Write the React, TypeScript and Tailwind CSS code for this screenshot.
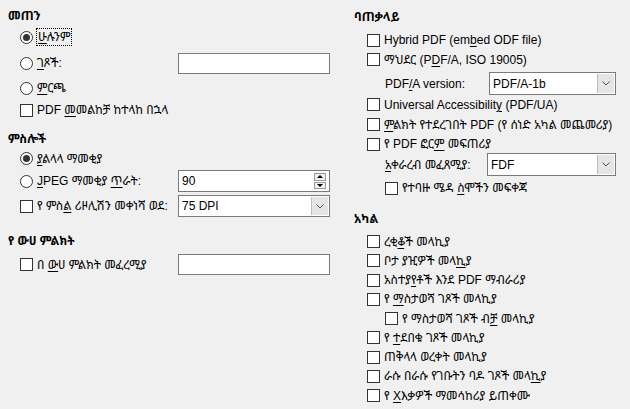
import React from "react";

const U = ({ children }: { children: React.ReactNode }) => (
  <span className="underline underline-offset-2 decoration-1">{children}</span>
);

const Radio = ({ checked }: { checked?: boolean }) => (
  <span className="w-[13px] h-[13px] rounded-full border border-[#333] bg-white flex items-center justify-center shrink-0">
    {checked && <span className="w-[7px] h-[7px] rounded-full bg-[#333]" />}
  </span>
);

const Check = () => <span className="w-[13px] h-[13px] border border-[#333] bg-white shrink-0" />;

const TextBox = () => <div className="w-[152px] h-[21px] border border-[#7a7a7a] bg-white" />;

const Chevron = () => (
  <svg width="8" height="5" viewBox="0 0 8 5" fill="none">
    <path d="M0.5 0.5 L4 4 L7.5 0.5" stroke="#555" strokeWidth="1" />
  </svg>
);

const Combo = ({ value, w }: { value: string; w: string }) => (
  <div className={`flex h-full border border-[#7a7a7a] bg-white ${w}`}>
    <span className="flex-1 flex items-center px-[3px]">{value}</span>
    <span className="w-[17px] m-[1px] bg-[#e5e5e5] border-l border-[#bdbdbd] flex items-center justify-center">
      <Chevron />
    </span>
  </div>
);

const Spin = ({ value }: { value: string }) => (
  <div className="flex w-[152px] h-full border border-[#7a7a7a] bg-white">
    <span className="flex-1 flex items-center px-[3px]">{value}</span>
    <span className="flex flex-col gap-[1px] my-[2px] mr-[3px]">
      <span className="w-[12px] h-[8px] border border-[#9a9a9a] bg-[#f0f0f0] flex items-center justify-center">
        <svg width="6" height="3" viewBox="0 0 6 3">
          <path d="M0 3 L3 0 L6 3 Z" fill="#000" />
        </svg>
      </span>
      <span className="w-[12px] h-[8px] border border-[#9a9a9a] bg-[#f0f0f0] flex items-center justify-center">
        <svg width="6" height="3" viewBox="0 0 6 3">
          <path d="M0 0 L3 3 L6 0 Z" fill="#000" />
        </svg>
      </span>
    </span>
  </div>
);

const Heading = ({ children, cls }: { children: React.ReactNode; cls: string }) => (
  <div className={`flex items-center h-[16px] font-bold ${cls}`}>{children}</div>
);

const Item = ({ box, children, cls }: { box: React.ReactNode; children: React.ReactNode; cls: string }) => (
  <div className={`flex items-center gap-[4px] ${cls}`}>
    {box}
    <span className="whitespace-nowrap">{children}</span>
  </div>
);

export default function App() {
  return (
    <div className="w-[630px] h-[409px] bg-[#f0f0f0] flex text-[12px] leading-none text-black font-['Liberation_Sans','Noto_Sans','Noto_Sans_Ethiopic',sans-serif]">
      {/* left column */}
      <div className="w-[340px] pl-[8px] pt-[8px] flex flex-col">
        <Heading cls="">መጠን</Heading>
        <div className="flex items-center h-[26px] pl-[12px] gap-[4px]">
          <Radio checked />
          <span className="outline-1 outline-dotted outline-black px-[1px] py-[2px]">
            <U>ሁ</U>ሉንም
          </span>
        </div>
        <div className="flex items-center h-[26px] pl-[12px]">
          <Item box={<Radio />} cls="w-[158px]">
            <U>ገ</U>ጾች:
          </Item>
          <TextBox />
        </div>
        <Item box={<Radio />} cls="h-[24px] pl-[12px]">
          <U>ም</U>ርጫ
        </Item>
        <Item box={<Check />} cls="h-[20px] pl-[12px]">
          PDF <U>መ</U>መልከቻ ከተላከ በኋላ
        </Item>

        <Heading cls="mt-[11px]">ምስሎች</Heading>
        <Item box={<Radio checked />} cls="h-[23px] pl-[12px]">
          <U>ያ</U>ልላላ ማመቂያ
        </Item>
        <div className="flex items-center h-[22px] pl-[12px]">
          <Item box={<Radio />} cls="w-[158px]">
            <U>J</U>PEG ማመቂያ <U>ጥ</U>ራት:
          </Item>
          <Spin value="90" />
        </div>
        <div className="flex items-center h-[22px] mt-[3px] pl-[12px]">
          <Item box={<Check />} cls="w-[158px]">
            የ ምስ<U>ል</U> ሪዞሊሽን መቀነሻ ወደ:
          </Item>
          <Combo value="75 DPI" w="w-[152px]" />
        </div>

        <Heading cls="mt-[16px]">የ ውሀ ምልክት</Heading>
        <div className="flex items-center h-[21px] mt-[5px] pl-[12px]">
          <Item box={<Check />} cls="w-[158px]">
            በ <U>ው</U>ሀ ምልክት መፈረሚያ
          </Item>
          <TextBox />
        </div>
      </div>

      {/* right column */}
      <div className="flex-1 pl-[14px] pt-[9px] flex flex-col">
        <Heading cls="">ባጠቃላይ</Heading>
        <Item box={<Check />} cls="h-[20px] mt-[5px] pl-[13px]">
          Hybrid PDF (em<U>b</U>ed ODF file)
        </Item>
        <Item box={<Check />} cls="h-[19px] pl-[13px]">
          ማህደር (P<U>D</U>F/A, ISO 19005)
        </Item>
        <div className="flex items-center h-[23px] mt-[3px] pl-[31px]">
          <span className="w-[104px] whitespace-nowrap">
            PDF<U>/</U>A version:
          </span>
          <Combo value="PDF/A-1b" w="w-[127px]" />
        </div>
        <Item box={<Check />} cls="h-[19px] pl-[13px]">
          Universal Accessibilit<U>y</U> (PDF/UA)
        </Item>
        <Item box={<Check />} cls="h-[21px] pl-[13px]">
          <U>ም</U>ልክት የተደረገበት PDF (የ ሰነድ አካል መጨመሪያ)
        </Item>
        <Item box={<Check />} cls="h-[18px] pl-[13px]">
          የ PDF ፎር<U>ም</U> መፍጠሪያ
        </Item>
        <div className="flex items-center h-[23px] pl-[31px]">
          <span className="w-[102px] whitespace-nowrap">
            <U>አ</U>ቀራረብ መፈጸሚያ:
          </span>
          <Combo value="FDF" w="w-[129px]" />
        </div>
        <Item box={<Check />} cls="h-[24px] pl-[31px]">
          የተባዙ ሜዳ <U>ስ</U>ሞችን መፍቀጃ
        </Item>

        <Heading cls="mt-[11px]">አካል</Heading>
        <div className="flex flex-col mt-[5px]">
          <Item box={<Check />} cls="h-[19.25px] pl-[13px]">
            ረቂ<U>ቆ</U>ች መላኪያ
          </Item>
          <Item box={<Check />} cls="h-[19.25px] pl-[13px]">
            ቦታ ያዢዎች መላ<U>ኪ</U>ያ
          </Item>
          <Item box={<Check />} cls="h-[19.25px] pl-[13px]">
            አስተያ<U>የ</U>ቶች እንደ PDF ማብራሪያ
          </Item>
          <Item box={<Check />} cls="h-[19.25px] pl-[13px]">
            የ <U>ማ</U>ስታወሻ ገጾች መላኪያ
          </Item>
          <Item box={<Check />} cls="h-[19.25px] pl-[31px]">
            የ ማስታወሻ ገጾች ብ<U>ቻ</U> መላኪያ
          </Item>
          <Item box={<Check />} cls="h-[19.25px] pl-[13px]">
            የ <U>ተ</U>ደበቁ ገጾች መላኪያ
          </Item>
          <Item box={<Check />} cls="h-[19.25px] pl-[13px]">
            ጠቅላላ ወረቀት መላኪያ
          </Item>
          <Item box={<Check />} cls="h-[19.25px] pl-[13px]">
            ራሱ በራሱ የገቡትን ባዶ ገጾች መላ<U>ኪ</U>ያ
          </Item>
          <Item box={<Check />} cls="h-[19.25px] pl-[13px]">
            የ <U>X</U>እቃዎች ማመሳከሪያ ይጠቀሙ
          </Item>
        </div>
      </div>
    </div>
  );
}
